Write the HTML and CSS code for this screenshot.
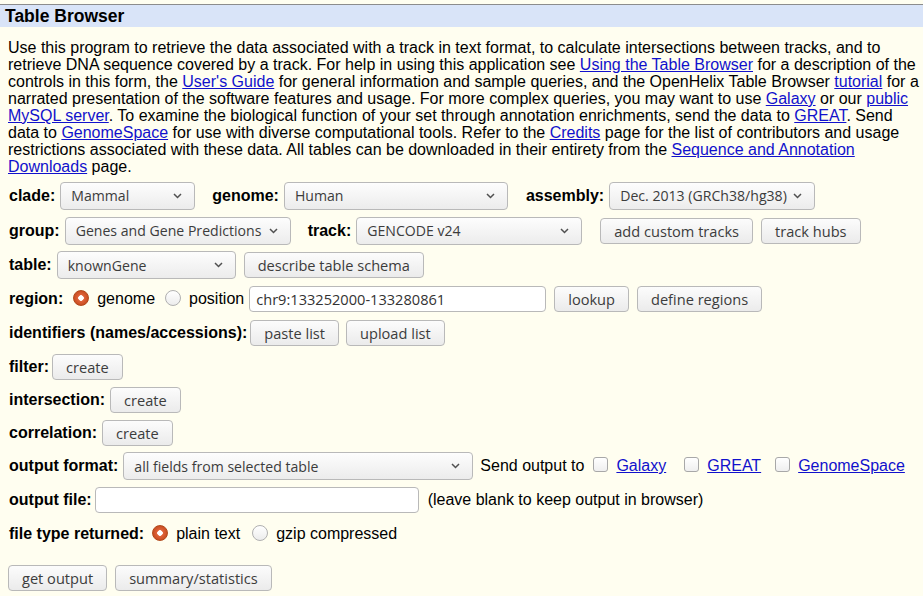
FILE: index.html
```html
<!DOCTYPE html>
<html>
<head>
<meta charset="utf-8">
<title>Table Browser</title>
<link rel="stylesheet" href="styles.css">
</head>
<body>
<div class="header">Table Browser</div>
<div class="content">
<p class="intro">Use this program to retrieve the data associated with a track in text format, to calculate intersections between tracks, and to<br>retrieve DNA sequence covered by a track. For help in using this application see <a href="#">Using the Table Browser</a> for a description of the<br>controls in this form, the <a href="#">User's Guide</a> for general information and sample queries, and the OpenHelix Table Browser <a href="#">tutorial</a> for a<br>narrated presentation of the software features and usage. For more complex queries, you may want to use <a href="#">Galaxy</a> or our <a href="#">public<br>MySQL server</a>. To examine the biological function of your set through annotation enrichments, send the data to <a href="#">GREAT</a>. Send<br>data to <a href="#">GenomeSpace</a> for use with diverse computational tools. Refer to the <a href="#">Credits</a> page for the list of contributors and usage<br>restrictions associated with these data. All tables can be downloaded in their entirety from the <a href="#">Sequence and Annotation<br>Downloads</a> page.</p>

<div class="form">
  <div class="row r35">
    <span class="lbl">clade:</span>
    <select class="sel w-clade"><option>Mammal</option></select>
    <span class="lbl ml17">genome:</span>
    <select class="sel w-genome"><option>Human</option></select>
    <span class="lbl ml18">assembly:</span>
    <select class="sel w-assembly"><option>Dec. 2013 (GRCh38/hg38)</option></select>
  </div>
  <div class="row r35">
    <span class="lbl">group:</span>
    <select class="sel w-group"><option>Genes and Gene Predictions</option></select>
    <span class="lbl ml17">track:</span>
    <select class="sel w-track"><option>GENCODE v24</option></select>
    <button class="btn ml18">add custom tracks</button>
    <button class="btn ml8">track hubs</button>
  </div>
  <div class="row r34">
    <span class="lbl">table:</span>
    <select class="sel w-table"><option>knownGene</option></select>
    <button class="btn ml8">describe table schema</button>
  </div>
  <div class="row r34">
    <span class="lbl">region:</span>
    <label class="opt"><input type="radio" name="region" class="radio" checked>genome</label>
    <label class="opt"><input type="radio" name="region" class="radio">position</label>
    <input type="text" class="txt w-pos" value="chr9:133252000-133280861">
    <button class="btn ml8">lookup</button>
    <button class="btn ml8">define regions</button>
  </div>
  <div class="row r34">
    <span class="lbl tight">identifiers (names/accessions):</span>
    <button class="btn">paste list</button>
    <button class="btn ml7">upload list</button>
  </div>
  <div class="row r33">
    <span class="lbl tight">filter:</span>
    <button class="btn">create</button>
  </div>
  <div class="row r33">
    <span class="lbl">intersection:</span>
    <button class="btn">create</button>
  </div>
  <div class="row r33">
    <span class="lbl">correlation:</span>
    <button class="btn">create</button>
  </div>
  <div class="row r34">
    <span class="lbl">output format:</span>
    <select class="sel w-format"><option>all fields from selected table</option></select>
    <span class="plain ml7">Send output to</span>
    <label class="chk ml9"><input type="checkbox" class="box"><a href="#">Galaxy</a></label>
    <label class="chk ml18"><input type="checkbox" class="box"><a href="#">GREAT</a></label>
    <label class="chk ml14"><input type="checkbox" class="box"><a href="#">GenomeSpace</a></label>
  </div>
  <div class="row r34">
    <span class="lbl tight">output file:</span>
    <input type="text" class="txt w-file" value="">
    <span class="plain ml9">(leave blank to keep output in browser)</span>
  </div>
  <div class="row r34">
    <span class="lbl tight">file type returned:</span>
    <label class="opt"><input type="radio" name="ftype" class="radio" checked>plain text</label>
    <label class="opt ml2"><input type="radio" name="ftype" class="radio">gzip compressed</label>
  </div>
  <div class="row r34 submit">
    <button class="btn">get output</button>
    <button class="btn ml8">summary/statistics</button>
  </div>
</div>
</div>
</body>
</html>
```

FILE: styles.css
```css
html, body {
  margin: 0;
  padding: 0;
  background: #fffef0;
}

body {
  font-family: "Liberation Sans", Arial, sans-serif;
  font-size: 16px;
  color: #000;
}

.header {
  margin-top: 4px;
  border-top: 1px solid #8c8c8c;
  background: #d9e4f8;
  height: 22px;
  line-height: 23px;
  padding-left: 5px;
  font-weight: bold;
  font-size: 17.5px;
}

.content {
  padding: 0 8px;
}

.intro {
  margin: 12px -8px 3px 0;
  line-height: 17px;
}

a {
  color: #1111cc;
  text-decoration: underline;
}

.form {
  display: flex;
  flex-direction: column;
}

.row {
  display: flex;
  align-items: center;
  white-space: nowrap;
}

.row > * {
  flex-shrink: 0;
}

.r35 { height: 35px; }
.r34 { height: 34px; }
.r33 { height: 33px; }
.submit { margin-top: 10px; }

.lbl {
  font-weight: bold;
  margin-left: 1px;
  margin-right: 5px;
}

.lbl.tight {
  margin-right: 3px;
}

.sel, .btn, .txt {
  font-family: "Open Sans", "Noto Sans", sans-serif;
  font-size: 14.6px;
  color: #3c3c3c;
  box-sizing: border-box;
  border: 1px solid #b9b9b9;
  border-radius: 4px;
  margin: 0;
}

.sel {
  appearance: none;
  -webkit-appearance: none;
  height: 28px;
  font-size: 14.1px;
  padding: 0 21px 0 10px;
  background:
    url("data:image/svg+xml,%3Csvg xmlns='http://www.w3.org/2000/svg' width='9' height='6' viewBox='0 0 9 6'%3E%3Cpath d='M1 1l3.5 3.5L8 1' fill='none' stroke='%23505050' stroke-width='1.5'/%3E%3C/svg%3E") no-repeat right 12px center,
    linear-gradient(#fdfdfd, #ececec);
}

.w-clade { width: 135px; }
.w-genome { width: 224px; }
.w-assembly { width: 206px; }
.w-group { width: 226px; }
.w-track { width: 226px; }
.w-table { width: 179px; }
.w-format { width: 350px; }

.btn {
  height: 26px;
  padding: 0 13px;
  background: linear-gradient(#fcfcfc, #ebebeb);
  cursor: pointer;
}

.txt {
  height: 26px;
  padding: 0 6px;
  background: #fff;
  color: #333;
}

.w-pos { width: 297px; }
.w-file { width: 324px; }

.opt {
  display: flex;
  align-items: center;
  margin-right: 5px;
}

.radio {
  appearance: none;
  -webkit-appearance: none;
  width: 16px;
  height: 16px;
  margin: 0 8px 2px 5px;
  border-radius: 50%;
  border: 1px solid #b0b0b0;
  background: linear-gradient(#ffffff, #ececec);
  box-sizing: border-box;
}

.radio:checked {
  border-color: #b24a1c;
  background: radial-gradient(circle at 50% 50%, #ffffff 0 2.5px, #e0643a 3px, #c4481c 8px);
}

.chk {
  display: flex;
  align-items: center;
}

.box {
  appearance: none;
  -webkit-appearance: none;
  width: 15px;
  height: 15px;
  margin: 0 8px 4px 0;
  border: 1px solid #a8a8a8;
  border-radius: 3px;
  background: linear-gradient(#ffffff, #efefef);
  box-sizing: border-box;
}

.ml2 { margin-left: 2px; }
.ml5 { margin-left: 5px; }
.ml7 { margin-left: 7px; }
.ml8 { margin-left: 8px; }
.ml9 { margin-left: 9px; }
.ml14 { margin-left: 14px; }
.ml17 { margin-left: 17px; }
.ml18 { margin-left: 18px; }
```
